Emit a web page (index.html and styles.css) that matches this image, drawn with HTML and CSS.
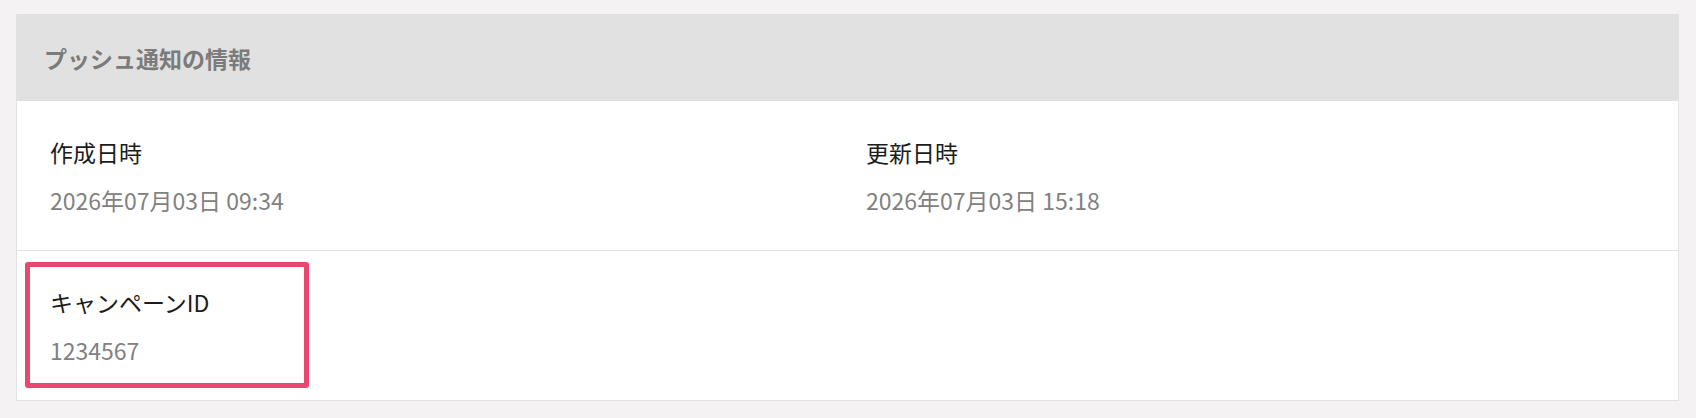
FILE: index.html
```html
<!DOCTYPE html>
<html lang="ja">
<head>
<meta charset="utf-8">
<title>プッシュ通知の情報</title>
<link rel="stylesheet" href="styles.css">
</head>
<body>
<section class="card">
  <header class="card-header">プッシュ通知の情報</header>
  <div class="row">
    <div class="cell">
      <div class="label">作成日時</div>
      <div class="value">2026年07月03日 09:34</div>
    </div>
    <div class="cell">
      <div class="label">更新日時</div>
      <div class="value">2026年07月03日 15:18</div>
    </div>
  </div>
  <div class="row">
    <div class="cell highlight">
      <div class="label">キャンペーンID</div>
      <div class="value">1234567</div>
    </div>
  </div>
</section>
</body>
</html>
```

FILE: styles.css
```css
html, body {
  margin: 0;
  padding: 0;
  background: #f4f2f3;
}
body {
  padding: 14px 17px 0 16px;
  font-family: "Noto Sans CJK JP", "Noto Sans", sans-serif;
}
.card {
  background: #ffffff;
  border: 1px solid #e2e2e2;
}
.card-header {
  height: 86px;
  display: flex;
  align-items: center;
  padding-left: 27px;
  background: #e1e1e1;
  color: #7b7b7b;
  font-size: 23px;
  font-weight: 700;
}
.row {
  display: grid;
  grid-template-columns: 816px 1fr;
  padding: 11px 8px 12px;
}
.row + .row {
  border-top: 1px solid #e2e2e2;
}
.cell {
  border: 5px solid transparent;
  border-radius: 3px;
  padding: 18px 20px 16px;
  box-sizing: border-box;
}
.cell.highlight {
  border-color: #ea4770;
  width: 284px;
}
.label {
  font-size: 23px;
  line-height: 34.5px;
  color: #1c1c1c;
}
.value {
  margin-top: 13px;
  font-size: 23px;
  line-height: 34.5px;
  color: #818181;
}
```
